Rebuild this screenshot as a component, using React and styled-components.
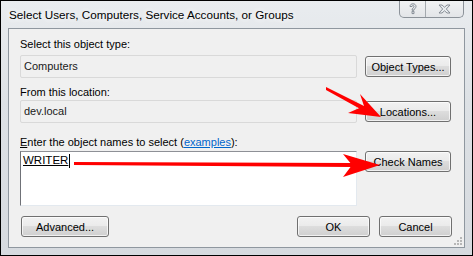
import React from 'react';
import styled, { createGlobalStyle } from 'styled-components';

const GlobalStyle = createGlobalStyle`
  html, body {
    margin: 0;
    padding: 0;
    background: #000;
  }
  * {
    box-sizing: border-box;
  }
`;

const Window = styled.div`
  position: relative;
  width: 473px;
  height: 256px;
  border: 1px solid #000;
  background: linear-gradient(180deg, #e9ecef 0%, #dde1e5 40%, #d6dadf 100%);
  display: flex;
  flex-direction: column;
  font-family: 'Liberation Sans', Arial, sans-serif;
  font-size: 11px;
  color: #000;
  overflow: hidden;
`;

const TitleBar = styled.div`
  height: 27px;
  display: flex;
  justify-content: space-between;
  align-items: flex-start;
`;

const Title = styled.div`
  padding: 7px 0 0 8px;
  font-size: 11.7px;
  line-height: 14px;
  text-shadow: 0 0 6px #fff, 0 0 10px #fff;
`;

const CaptionButtons = styled.div`
  display: flex;
  margin: -1px 8px 0 0;
  border: 1px solid #8c9299;
  border-top: none;
  border-radius: 0 0 5px 5px;
  overflow: hidden;
  background: linear-gradient(180deg, #f2f3f4 0%, #e3e5e8 100%);
`;

const CaptionButton = styled.div`
  width: ${(p) => p.$w}px;
  height: 17px;
  display: flex;
  align-items: center;
  justify-content: center;
  & + & {
    border-left: 1px solid #a4a9ae;
  }
`;

const Client = styled.div`
  position: relative;
  flex: 1;
  margin: 0 7px 7px 7px;
  border: 1px solid #8f979f;
  background: #f0f0f0;
  padding: 8px 12px 0 11px;
  display: flex;
  flex-direction: column;
`;

const Label = styled.div`
  height: 15px;
  line-height: 15px;
  margin-top: ${(p) => p.$mt || 0}px;
  margin-bottom: ${(p) => p.$mb || 0}px;
  u {
    text-decoration: underline;
  }
`;

const Link = styled.span`
  color: #0066cc;
  text-decoration: underline;
`;

const Row = styled.div`
  display: grid;
  grid-template-columns: 337px 86px;
  column-gap: 8px;
  align-items: ${(p) => p.$align || 'center'};
`;

const ReadOnlyBox = styled.div`
  height: 23px;
  line-height: 21px;
  padding-left: 3px;
  border: 1px solid #d9d9d9;
  border-radius: 2px;
  background: #f0f0f0;
  color: #1a1a1a;
`;

const NamesBox = styled.div`
  height: 55px;
  padding: 2px 2px;
  border: 1px solid #abadb3;
  border-left-color: #6f7177;
  border-top-color: #8e9096;
  border-right-color: #e3e9ef;
  border-bottom-color: #e3e9ef;
  background: #fff;
  display: flex;
  align-items: flex-start;
`;

const Resolved = styled.span`
  line-height: 13px;
  text-decoration: underline;
  font-size: 11.5px;
`;

const Caret = styled.span`
  display: inline-block;
  width: 1px;
  height: 14px;
  background: #000;
  margin-left: 1px;
`;

const Button = styled.div`
  width: ${(p) => p.$w || 86}px;
  height: 21px;
  border: 1px solid #707070;
  border-radius: 3px;
  background: linear-gradient(180deg, #f2f2f2 0%, #ebebeb 45%, #dddddd 50%, #cfcfcf 100%);
  box-shadow: inset 0 0 0 1px rgba(255, 255, 255, 0.7);
  display: flex;
  align-items: center;
  justify-content: center;
  font-size: 11px;
  color: #000;
`;

const ButtonBar = styled.div`
  margin-top: 10px;
  display: flex;
  align-items: center;
  padding-left: 1px;
  gap: 9px;
`;

const Spacer = styled.div`
  flex: 1;
`;

const Grip = styled.svg`
  position: absolute;
  right: 1px;
  bottom: 1px;
`;

const Overlay = styled.svg`
  position: absolute;
  left: -1px;
  top: -1px;
  pointer-events: none;
`;

const HelpIcon = () => (
  <svg width="10" height="12" viewBox="0 0 10 12">
    <path
      d="M2 3.5 C2 1.5 3.5 0.8 5 0.8 C6.8 0.8 8 2 8 3.5 C8 5 6.2 5.6 6 7.2 L4 7.2 C4 5.2 6 4.6 6 3.5 C6 2.8 5.5 2.5 5 2.5 C4.4 2.5 4 2.9 4 3.5 Z M4 8.3 H6 V10.6 H4 Z"
      fill="#e9ecef"
      stroke="#7d858d"
      strokeWidth="0.9"
    />
  </svg>
);

const CloseIcon = () => (
  <svg width="13" height="10" viewBox="0 0 13 10">
    <path
      d="M1 1 H4 L6.5 3.2 L9 1 H12 L8.3 5 L12 9 H9 L6.5 6.8 L4 9 H1 L4.7 5 Z"
      fill="#e9ecef"
      stroke="#7d858d"
      strokeWidth="0.9"
    />
  </svg>
);

export default function App() {
  return (
    <>
      <GlobalStyle />
      <Window>
        <TitleBar>
          <Title>Select Users, Computers, Service Accounts, or Groups</Title>
          <CaptionButtons>
            <CaptionButton $w={25}>
              <HelpIcon />
            </CaptionButton>
            <CaptionButton $w={38}>
              <CloseIcon />
            </CaptionButton>
          </CaptionButtons>
        </TitleBar>

        <Client>
          <Label $mb={3}>Select this object type:</Label>
          <Row>
            <ReadOnlyBox>Computers</ReadOnlyBox>
            <Button>Object Types...</Button>
          </Row>

          <Label $mt={7} $mb={0}>From this location:</Label>
          <Row>
            <ReadOnlyBox>dev.local</ReadOnlyBox>
            <Button>Locations...</Button>
          </Row>

          <Label $mt={12} $mb={1}>
            <u>E</u>nter the object names to select (<Link>examples</Link>):
          </Label>
          <Row $align="start">
            <NamesBox>
              <Resolved>WRITER</Resolved>
              <Caret />
            </NamesBox>
            <Button>Check Names</Button>
          </Row>

          <ButtonBar>
            <Button $w={88}>Advanced...</Button>
            <Spacer />
            <Button $w={73}>OK</Button>
            <Button $w={73}>Cancel</Button>
          </ButtonBar>

          <Grip width="10" height="10" viewBox="0 0 10 10">
            <g fill="#b7b7b7">
              <rect x="7" y="1" width="2" height="2" />
              <rect x="4" y="4" width="2" height="2" />
              <rect x="7" y="4" width="2" height="2" />
              <rect x="1" y="7" width="2" height="2" />
              <rect x="4" y="7" width="2" height="2" />
              <rect x="7" y="7" width="2" height="2" />
            </g>
          </Grip>
        </Client>

        <Overlay width="473" height="256" viewBox="0 0 473 256">
          <g fill="#ff0000" stroke="none">
            <polygon points="326,87 366,107 364,111 326,90" />
            <polygon points="381,117 360,94 364,106 348,113" />
            <polygon points="74,162 352,163 352,167 74,165" />
            <polygon points="380,165 343,154 352,165 343,177" />
          </g>
        </Overlay>
      </Window>
    </>
  );
}
